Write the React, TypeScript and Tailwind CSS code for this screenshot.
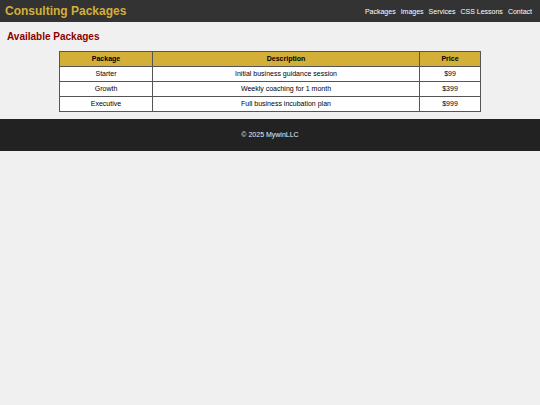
import React from 'react';

const packages = [
  { name: 'Starter', description: 'Initial business guidance session', price: '$99' },
  { name: 'Growth', description: 'Weekly coaching for 1 month', price: '$399' },
  { name: 'Executive', description: 'Full business incubation plan', price: '$999' },
];

const links = ['Packages', 'Images', 'Services', 'CSS Lessons', 'Contact'];

export default function App() {
  return (
    <div className="min-h-[405px] bg-[#f0f0f0] font-['Liberation_Sans',Arial,sans-serif]">
      {/* Header */}
      <header className="flex h-[22px] items-center justify-between bg-[#333333] pl-[5px] pr-[8px]">
        <h1 className="text-[12px] font-bold leading-none text-[#d4af37]">Consulting Packages</h1>
        <nav className="flex gap-[5px]">
          {links.map((l) => (
            <a key={l} href="#" className="text-[7px] leading-none text-white">
              {l}
            </a>
          ))}
        </nav>
      </header>

      {/* Main */}
      <main className="px-[7px] pt-[9px] pb-[7px]">
        <h2 className="text-[10px] font-bold leading-[12px] text-[#8b0000]">Available Packages</h2>
        <table className="mx-auto mt-[8px] w-[422px] border-collapse bg-white text-[7px] text-black">
          <thead>
            <tr className="h-[15px] bg-[#d4af37]">
              <th className="w-[93px] border border-[#555] font-bold">Package</th>
              <th className="border border-[#555] font-bold">Description</th>
              <th className="w-[61px] border border-[#555] font-bold">Price</th>
            </tr>
          </thead>
          <tbody>
            {packages.map((p) => (
              <tr key={p.name} className="h-[15px]">
                <td className="border border-[#555] text-center">{p.name}</td>
                <td className="border border-[#555] text-center">{p.description}</td>
                <td className="border border-[#555] text-center">{p.price}</td>
              </tr>
            ))}
          </tbody>
        </table>
      </main>

      {/* Footer */}
      <footer className="flex h-[32px] items-center justify-center bg-[#222222]">
        <p className="text-[7px] text-[#eeeeee]">© 2025 MywinLLC</p>
      </footer>
    </div>
  );
}
